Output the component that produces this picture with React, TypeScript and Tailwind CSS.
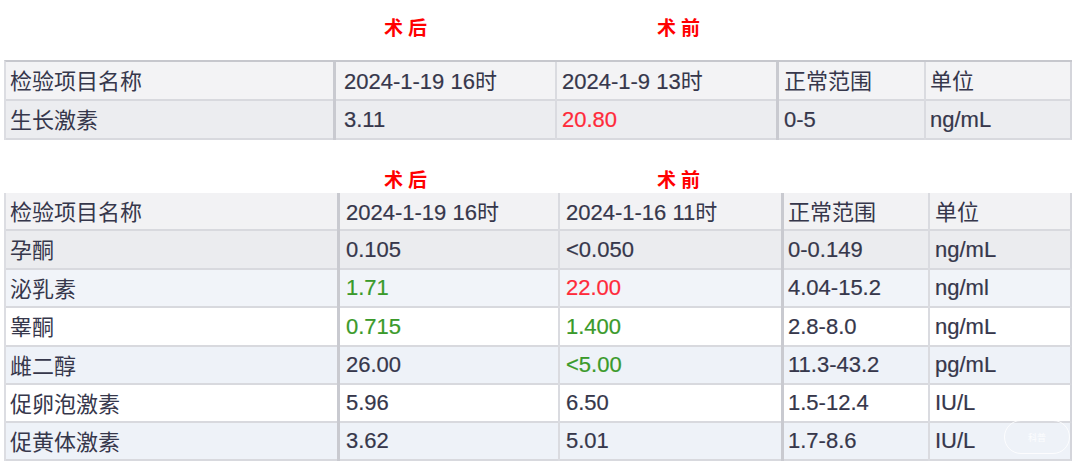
import React from "react";

const FONT = "font-['Liberation_Sans','Noto_Sans_CJK_SC',sans-serif]";
const COLS1 = "grid-cols-[327px_3px_219px_2px_219px_3px_145px_2px_146px]";
const COLS2 = "grid-cols-[331px_3px_218px_2px_221px_3px_144px_2px_142px]";

type Cell = { t: string; c?: string };

function Txt({ t }: { t: string }) {
  const parts = t.match(/[\u4e00-\u9fff]+|[^\u4e00-\u9fff]+/g) ?? [];
  return (
    <span>
      {parts.map((p, i) =>
        /[\u4e00-\u9fff]/.test(p) ? (
          <span key={i} className="text-[22px] font-['Noto_Sans_CJK_SC',sans-serif]">
            {p}
          </span>
        ) : (
          <span key={i} className="text-[22px] [-webkit-text-stroke:0.2px]">
            {p}
          </span>
        )
      )}
    </span>
  );
}

function Row({ cells, bg, h, pads }: { cells: Cell[]; bg: string; h: string; pads: string[] }) {
  const seps = ["bg-[#c9cad0]", "bg-[#dadbe0]", "bg-[#c9cad0]", "bg-[#dadbe0]"];
  const out: React.ReactNode[] = [];
  cells.forEach((cell, i) => {
    out.push(
      <div
        key={"c" + i}
        className={`flex items-center ${pads[i]} ${h} ${bg} border-b-2 border-[#d8d9de] ${
          cell.c ?? "text-[#36374b]"
        } ${i === 4 ? "border-r-2 border-r-[#d4d5db]" : ""}`}
      >
        <Txt t={cell.t} />
      </div>
    );
    if (i < 4) out.push(<div key={"s" + i} className={`${h} ${seps[i]}`} />);
  });
  return <>{out}</>;
}

const PADS1 = ["pl-[4px]", "pl-[8px]", "pl-[5px]", "pl-[5px]", "pl-[4px]"];
const PADS2 = ["pl-[4px]", "pl-[6px]", "pl-[6px]", "pl-[4px]", "pl-[5px]"];

const RED = "text-[#ff2a3a]";
const GREEN = "text-[#3a9a2a]";

function Titles({ cls }: { cls: string }) {
  return (
    <div className={`grid ${COLS1} ml-[6px] ${cls}`}>
      <div />
      <div />
      <div className="pl-[48px] text-[19px] font-bold text-[#ff0000] tracking-[5px] font-['Noto_Sans_CJK_SC',sans-serif] leading-none">
        术后
      </div>
      <div />
      <div className="pl-[100px] text-[19px] font-bold text-[#ff0000] tracking-[5px] font-['Noto_Sans_CJK_SC',sans-serif] leading-none">
        术前
      </div>
    </div>
  );
}

export default function App() {
  const rows2: { cells: Cell[]; bg: string; h: string }[] = [
    {
      cells: [{ t: "孕酮" }, { t: "0.105" }, { t: "<0.050" }, { t: "0-0.149" }, { t: "ng/mL" }],
      bg: "bg-[#ebecef]",
      h: "h-[39px]",
    },
    {
      cells: [{ t: "泌乳素" }, { t: "1.71", c: GREEN }, { t: "22.00", c: RED }, { t: "4.04-15.2" }, { t: "ng/ml" }],
      bg: "bg-[#f1f4f9]",
      h: "h-[38px]",
    },
    {
      cells: [{ t: "睾酮" }, { t: "0.715", c: GREEN }, { t: "1.400", c: GREEN }, { t: "2.8-8.0" }, { t: "ng/mL" }],
      bg: "bg-white",
      h: "h-[39px]",
    },
    {
      cells: [{ t: "雌二醇" }, { t: "26.00" }, { t: "<5.00", c: GREEN }, { t: "11.3-43.2" }, { t: "pg/mL" }],
      bg: "bg-[#eef2f8]",
      h: "h-[38px]",
    },
    {
      cells: [{ t: "促卵泡激素" }, { t: "5.96" }, { t: "6.50" }, { t: "1.5-12.4" }, { t: "IU/L" }],
      bg: "bg-white",
      h: "h-[38px]",
    },
    {
      cells: [{ t: "促黄体激素" }, { t: "3.62" }, { t: "5.01" }, { t: "1.7-8.6" }, { t: "IU/L" }],
      bg: "bg-[#eef2f8]",
      h: "h-[38px]",
    },
  ];

  return (
    <div className={`relative w-[1080px] h-[469px] bg-white overflow-hidden ${FONT} text-[22px] leading-none`}>
      <Titles cls="h-[60px] pt-[17px]" />
      {/* table 1 */}
      <div className={`grid ${COLS1} ml-[4px] w-max border-t-2 border-l-2 border-[#c6c7cd] border-l-[#dcdde2]`}>
        <Row
          h="h-[39px]"
          bg="bg-[#f3f3f5]"
          pads={PADS1}
          cells={[{ t: "检验项目名称" }, { t: "2024-1-19 16时" }, { t: "2024-1-9 13时" }, { t: "正常范围" }, { t: "单位" }]}
        />
        <Row
          h="h-[39px]"
          bg="bg-[#ecedf0]"
          pads={PADS1}
          cells={[{ t: "生长激素" }, { t: "3.11" }, { t: "20.80", c: RED }, { t: "0-5" }, { t: "ng/mL" }]}
        />
      </div>
      <Titles cls="h-[53px] pt-[29px]" />
      {/* table 2 */}
      <div className={`grid ${COLS2} ml-[4px] w-max border-l-2 border-[#dcdde2]`}>
        <Row
          h="h-[38px]"
          bg="bg-[#f2f2f4]"
          pads={PADS2}
          cells={[{ t: "检验项目名称" }, { t: "2024-1-19 16时" }, { t: "2024-1-16 11时" }, { t: "正常范围" }, { t: "单位" }]}
        />
        {rows2.map((r, i) => (
          <Row key={i} h={r.h} bg={r.bg} pads={PADS2} cells={r.cells} />
        ))}
      </div>
      {/* faint watermark */}
      <div className="absolute left-[1004px] top-[420px] w-[66px] h-[34px] rounded-full border border-white/80 flex items-center justify-center">
        <span className="text-[9px] text-white/80 font-['Noto_Sans_CJK_SC',sans-serif]">科普</span>
      </div>
    </div>
  );
}
